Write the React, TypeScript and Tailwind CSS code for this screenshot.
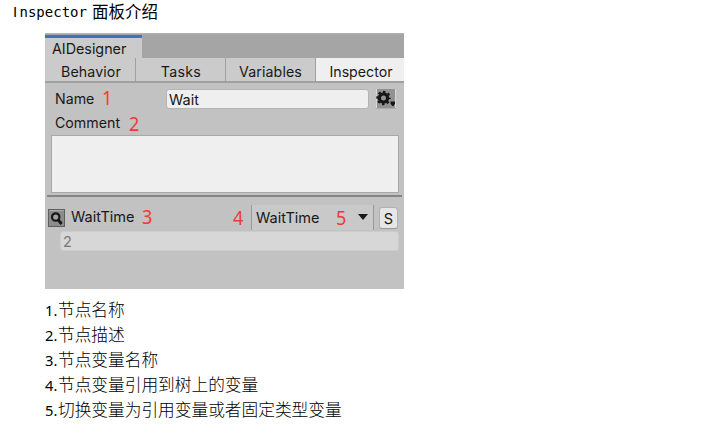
import type { ReactNode } from "react";

const notes = [
  "节点名称",
  "节点描述",
  "节点变量名称",
  "节点变量引用到树上的变量",
  "切换变量为引用变量或者固定类型变量",
];

function Mark({ children, className }: { children: ReactNode; className: string }) {
  return (
    <span className={`font-['Noto_Sans',sans-serif] text-[20px] leading-[20px] text-[#f03a30] ${className}`}>
      <span className="inline-block origin-left scale-x-90">{children}</span>
    </span>
  );
}

function GearButton() {
  return (
    <svg className="ml-[7px] h-5 w-5 shrink-0" viewBox="0 0 20 20">
      <rect width="20" height="20" fill="#929292" />
      <path d="M0.5 0V20M19.5 0V20" stroke="#d8d8d8" />
      <path d="M0 19.5H20" stroke="#aaaaaa" />
      <circle cx="7.5" cy="9" r="4.1" fill="none" stroke="#161616" strokeWidth="3.2" />
      <circle cx="7.5" cy="9" r="6.1" fill="none" stroke="#161616" strokeWidth="2.2" strokeDasharray="2.4 2.39" strokeDashoffset="1.2" />
      <path d="M14.5 12.5H19V14.5L17.6 17H16.2L14.5 14.5Z" fill="#161616" />
    </svg>
  );
}

function SearchButton() {
  return (
    <svg className="mt-[12px] h-[18px] w-[17px] shrink-0" viewBox="0 0 17 18">
      <rect x="0.5" y="0.5" width="16" height="17" fill="#8c8c8c" stroke="#5e5e5e" />
      <path d="M1.5 1.5H15.5" stroke="#b0b0b0" />
      <circle cx="7.7" cy="8" r="3.7" fill="#a0a0a0" stroke="#171717" strokeWidth="2.2" />
      <path d="M10 10.6L13.6 15" stroke="#171717" strokeWidth="3" />
    </svg>
  );
}

export default function App() {
  return (
    <main className="h-[436px] w-[713px] bg-white">
      <h1 className="flex h-[33px] items-start pl-3 text-black">
        <span className="w-[75px] whitespace-pre font-['DejaVu_Sans_Mono',monospace] text-[14px] leading-[23px]">
          <span className="inline-block w-[7.5px] pl-px font-['Liberation_Sans',sans-serif] text-[15px]">I</span>nspector
        </span>
        <span className="ml-[5px] font-['Noto_Sans_CJK_SC',sans-serif] text-[16.5px] leading-[22px]">面板介绍</span>
      </h1>

      <section className="ml-[45px] flex h-64 w-[359px] flex-col bg-[#c2c2c2] font-['Inter',sans-serif] text-[14.5px] text-[#181818]">
        <div className="h-[25px] shrink-0 border-t border-[#b4b4b4] bg-[#a5a5a5]">
          <div className="mt-px h-[23px] w-[97px] border-t-[3px] border-[#3f73b8] bg-[#cbcbcb] pl-[7px] text-[14.3px] leading-[21px]">
            AIDesigner
          </div>
        </div>
        <nav className="flex h-[25px] shrink-0 border-b-2 border-[#a0a0a0] bg-[#cbcbcb] text-center text-[14.2px] leading-[27px]">
          <div className="h-[23px] w-[91px] border-r border-[#a0a0a0] pl-[2px] tracking-[0.1px]">Behavior</div>
          <div className="h-[23px] w-[90px] border-r border-[#a0a0a0] pl-px tracking-[0.3px]">Tasks</div>
          <div className="h-[23px] w-[90px] border-r border-[#a0a0a0] tracking-[0.1px]">Variables</div>
          <div className="h-[23px] w-[88px] bg-[#efefef] pl-[2px] tracking-[0px]">Inspector</div>
        </nav>
        <div className="mt-[6px] flex h-5 shrink-0 pl-[10px] leading-5">
          <span className="w-[47px] text-[14.2px]">Name</span>
          <Mark className="relative -top-px w-16">1</Mark>
          <div className="h-5 w-[203px] rounded-[3px] border border-[#b4b4b4] bg-[#efefef] pl-[2px] leading-5">Wait</div>
          <GearButton />
        </div>
        <div className="mt-1 flex h-[22px] shrink-0 pl-[10px] leading-5">
          <span className="w-[74px] text-[14.2px]">Comment</span>
          <Mark className="mt-px">2</Mark>
        </div>
        <div className="ml-[6px] h-[58px] w-[348px] shrink-0 border border-[#a8a8a8] bg-[#efefef]" />
        <div className="ml-[2px] mt-[2px] h-[2px] w-[355px] shrink-0 bg-[#858585]" />
        <div className="flex h-[34px] shrink-0 pl-[3px]">
          <SearchButton />
          <span className="ml-[6px] mt-[10px] w-[71px] leading-5">WaitTime</span>
          <Mark className="mt-[10px] w-[91px]">3</Mark>
          <Mark className="mt-[11px] w-[18px]">4</Mark>
          <div className="mt-2 flex h-[25px] w-[123px] border-x border-[#999999] bg-[#c9c9c9] pl-1 leading-[26px]">
            <span className="w-[80px]">WaitTime</span>
            <Mark className="mt-[3px] w-[22px]">5</Mark>
            <svg className="mt-[9px] h-[6px] w-[10px]" viewBox="0 0 10 6">
              <path d="M0 0H10L5 6Z" fill="#181818" />
            </svg>
          </div>
          <div className="ml-[5px] mt-[10px] h-[22px] w-[19px] rounded-[3px] border border-b-[#999999] border-[#b2b2b2] bg-[#e6e6e6] text-center leading-[21px]">S</div>
        </div>
        <div className="ml-[15px] h-5 w-[339px] shrink-0 rounded-[3px] border border-[#cccccc] bg-[#d7d7d7] pl-[2px] leading-5 text-[#777777]">2</div>
      </section>

      <ol className="ml-[45px] mt-2 text-black">
        {notes.map((note, i) => (
          <li key={note} className="flex h-[25px] leading-[25px]">
            <span className="w-[13px] pt-px font-['Noto_Sans',sans-serif] text-[14.7px]">{i + 1}.</span>
            <span className="font-['Noto_Sans_CJK_SC',sans-serif] text-[16.7px] font-light">{note}</span>
          </li>
        ))}
      </ol>
    </main>
  );
}
